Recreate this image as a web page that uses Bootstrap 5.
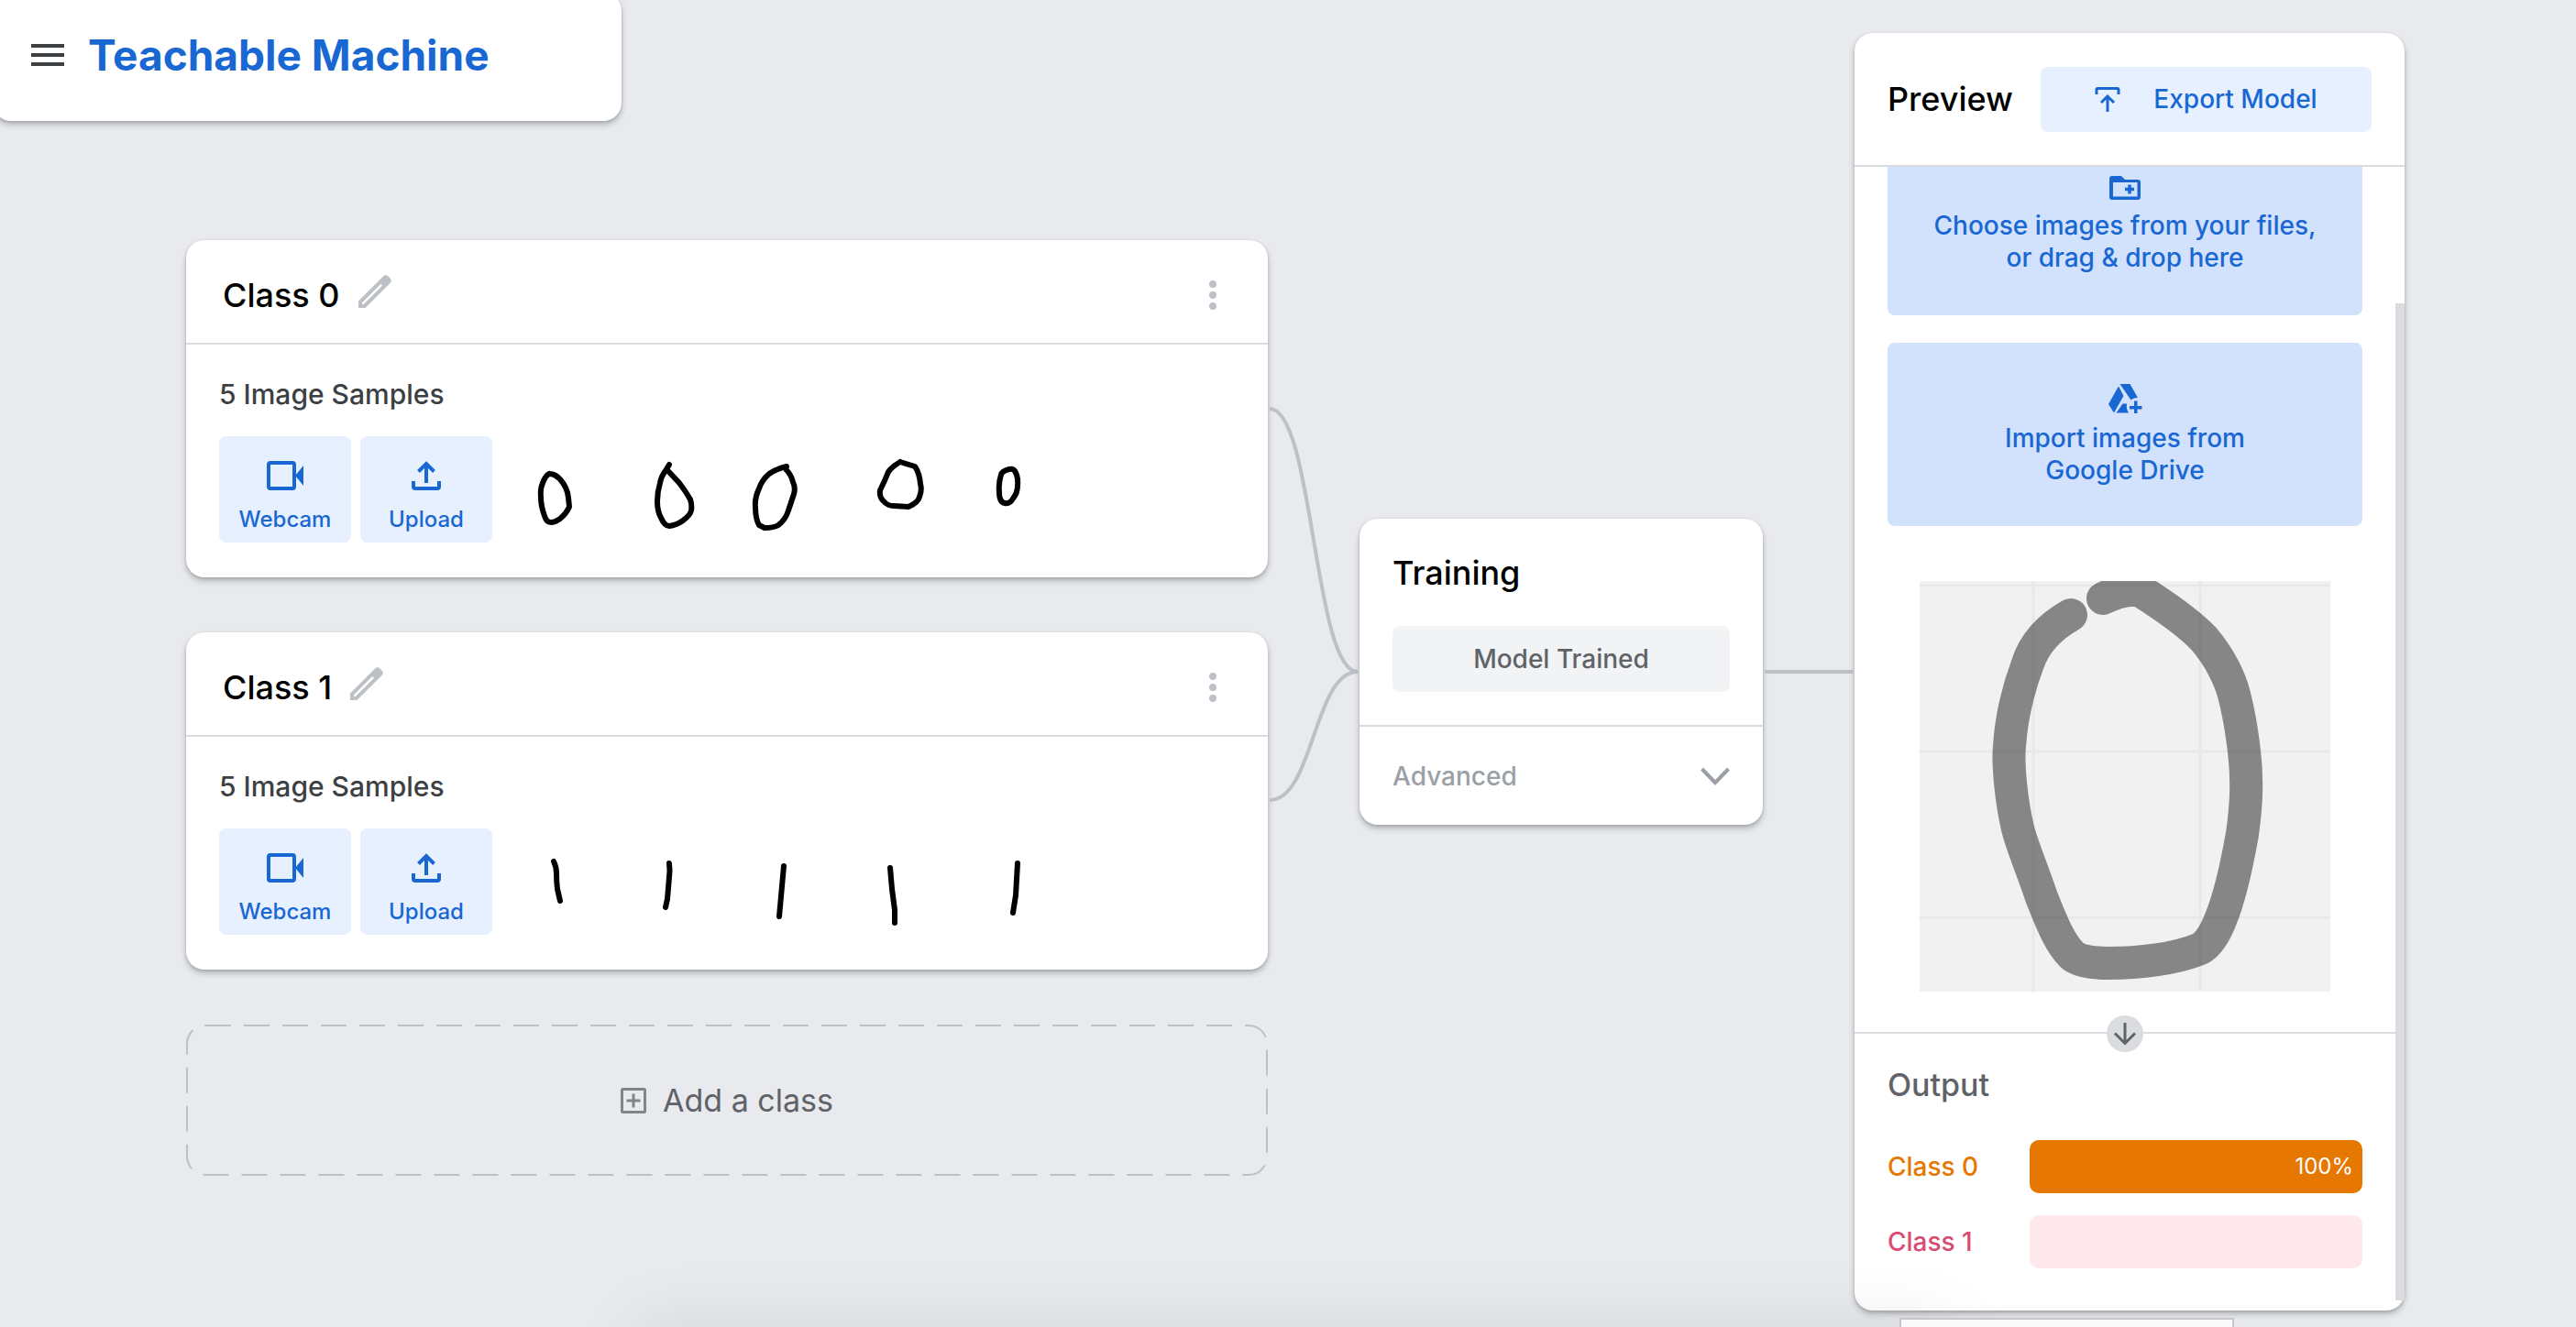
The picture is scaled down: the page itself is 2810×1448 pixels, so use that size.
<!DOCTYPE html>
<html lang="en">
<head>
<meta charset="utf-8">
<meta name="viewport" content="width=device-width, initial-scale=1">
<title>Teachable Machine</title>
<link href="https://cdn.jsdelivr.net/npm/bootstrap@5.3.0/dist/css/bootstrap.min.css" rel="stylesheet">
<style>
  :root { --blue: #1967d2; --line: #bdc1c6; --rule: #dadce0; }
  body { background: #e8eaed; font-family: Inter, Lato, sans-serif; font-weight: 500; color: #000; overflow: hidden; min-height: 100vh; }
  button { font-family: inherit; font-weight: inherit; }
  svg { display: block; flex: none; }
  .panel { background: #fff; border-radius: 20px; box-shadow: 0 4px 6px rgba(60,64,67,.3), 0 1px 3px rgba(60,64,67,.2); }
  .topbar { width: 686px; height: 140px; margin: -8px 0 0 -8px; padding: 0 34px 4px 42px; gap: 26px; }
  .brand-title { color: var(--blue); font-size: 46px; font-weight: 700; line-height: 56px; text-decoration: none; }
  .bare { background: none; border: 0; padding: 0; }
  .flow { padding: 130px 0 0 203px; }
  .classes { gap: 60px; }
  .title { font-size: 36px; line-height: 44px; font-weight: 500; margin: 0; }
  .class-head { height: 114px; padding: 8px 52px 0 40px; border-bottom: 2px solid var(--rule); gap: 20px; }
  .rename { margin-bottom: 8px; }
  .class-body { padding: 32px 36px 38px; }
  .samples-note { font-size: 30px; line-height: 44px; color: #3c4043; margin: 0 0 24px; }
  .tile-btn { width: 144px; height: 116px; background: #e6f0ff; color: var(--blue); border: 0; border-radius: 8px; padding: 14px 0 0; font-size: 24px; line-height: 32px; gap: 12px; }
  .sources, .thumbs { display: flex; gap: 10px; }
  .samples { gap: 8px; }
  .sample { width: 116px; height: 116px; fill: none; stroke: #000; stroke-width: 6; stroke-linecap: round; stroke-linejoin: round; }
  .add-class { height: 165px; color: #5f6368; font-size: 34px; line-height: 44px; font-weight: 400; gap: 18px; border-radius: 20px; position: relative; }
  .dashes { position: absolute; inset: 0; width: 100%; height: 100%; fill: none; stroke: var(--line); stroke-width: 2; stroke-dasharray: 28 14; }
  .wire { width: 100px; fill: none; stroke: var(--line); stroke-width: 4; padding: 0 2px; }
  .wire-in { margin-top: 180px; height: 436px; }
  .wire-out { margin: 469px 2px 0; height: 4px; background: var(--line); width: 96px; }
  .training { width: 440px; margin-top: 304px; }
  .training-main { padding: 37px 36px 36px; }
  .btn-trained { height: 72px; margin-top: 36px; background: #f1f3f4; color: #5f6368; border: 0; border-radius: 8px; font-size: 28px; }
  .btn-advanced { height: 109px; padding: 0 36px; border-top: 2px solid var(--rule); color: #9aa0a6; font-size: 28px; }
  .preview { width: 600px; height: 1394px; margin: 36px 187px 0 0; position: relative; }
  .preview-head { height: 146px; padding: 0 36px; border-bottom: 2px solid var(--rule); }
  .btn-export { width: 361px; height: 71px; background: #e6f0ff; color: var(--blue); border: 0; border-radius: 8px; font-size: 28px; gap: 36px; }
  .preview-body { overflow: hidden; margin-right: 10px; }
  .uploads { padding: 0 36px; gap: 30px; margin-top: -38px; }
  .btn-drop { height: 200px; background: #d2e1fc; color: var(--blue); border: 0; border-radius: 8px; font-size: 28px; line-height: 35px; gap: 4px; padding: 0; }
  .from-files { padding-bottom: 5px; }
  .photo { width: 448px; height: 448px; margin: 60px auto 44px; }
  .scroll-thumb { position: absolute; right: 0; top: 295px; bottom: 11px; width: 10px; background: var(--rule); }
  .split { border-top: 2px solid var(--rule); height: 2px; }
  .split svg { position: relative; top: -20px; }
  .output { padding: 34px 36px 0; }
  .output h3 { font-size: 34px; line-height: 44px; color: #5f6368; margin: 0 0 38px; }
  .result { gap: 24px; margin-bottom: 24px; font-size: 28px; }
  .result label { width: 131px; }
  .meter { height: 58px; border-radius: 10px; overflow: hidden; }
  .meter div { height: 58px; color: #fff; font-size: 24px; font-weight: 400; padding-right: 10px; }
  .c0 { color: #e67700; } .m0 { background: #ffecd9; } .m0 div { background: #e67700; }
  .c1 { color: #d84c72; } .m1 { background: #ffe8ec; }
  .dock { position: fixed; left: 720px; right: 700px; top: 1470px; height: 100px; box-shadow: 0 0 80px 20px rgba(0,0,0,.1); z-index: 3; }
  .hint { position: fixed; left: 2072px; top: 1438px; width: 365px; height: 40px; background: #fafafa; border: 2px solid #c6c6c6; z-index: 4; }
</style>
</head>
<body>
<div class="d-flex align-items-start">
  <div class="flex-grow-1">
    <header class="topbar panel d-flex align-items-center">
      <button class="bare" type="button" aria-label="Menu"><svg width="36" height="24" fill="#3c4043"><path d="M0 0h36v4H0zM0 10h36v4H0zM0 20h36v4H0z"/></svg></button>
      <a class="brand-title" href="#">Teachable Machine</a>
    </header>
    <main class="flow d-flex align-items-start">
      <div class="classes d-flex flex-column flex-grow-1">
        <section class="panel">
          <div class="class-head d-flex align-items-center">
            <h2 class="title">Class 0</h2>
            <button class="bare rename" type="button" aria-label="Rename Class 0"><svg width="36" height="36" viewBox="0 0 36 36"><path fill="#bdc1c6" fill-rule="evenodd" d="M0 28.500L26.800 1.700Q29.500-1 32.200 1.300L34.700 3.800Q37 6.500 34.300 9.200L7.500 36H0zM4 30.200V32H5.800L26 11.800L24.200 10z"/></svg></button>
            <button class="bare ms-auto" type="button" aria-label="Class 0 options"><svg width="16" height="36" fill="#bdc1c6"><circle cx="8" cy="6" r="4"/><circle cx="8" cy="18" r="4"/><circle cx="8" cy="30" r="4"/></svg></button>
          </div>
          <div class="class-body">
            <p class="samples-note">5 Image Samples</p>
            <div class="samples d-flex">
              <div class="sources">
                <button class="tile-btn d-flex flex-column align-items-center justify-content-center" type="button"><svg width="40" height="40" viewBox="0 0 40 40"><rect x="2" y="6" width="28" height="28" rx="2" fill="none" stroke="#1967d2" stroke-width="4"/><path d="M31 20l9-11v22z" fill="#1967d2"/></svg>Webcam</button>
                <button class="tile-btn d-flex flex-column align-items-center justify-content-center" type="button"><svg width="40" height="40" viewBox="0 0 40 40" fill="none" stroke="#1967d2" stroke-width="4"><path d="M6 26v6q0 2 2 2h24q2 0 2-2v-6M20 28V7M11.500 15.500L20 7l8.500 8.500"/></svg>Upload</button>
              </div>
              <div class="thumbs">
                <svg class="sample" viewBox="0 0 116 116"><path d="M54 41C60 41 63 44 66 47Q74 56 75 67L76 77Q73 84 66 90Q60 94 56 94Q51 94 49 87Q45 76 45 67Q44 58 47 51Q50 43 54 41"/></svg>
                <svg class="sample" viewBox="0 0 116 116"><path d="M59 31L56 36Q50 44 49 51Q46 61 46 71Q46 82 50 89Q54 98 59 98Q67 97 74 92Q82 86 83 81Q84 75 82 69Q77 60 70 51L56 36"/></svg>
                <svg class="sample" viewBox="0 0 116 116"><path d="M61 33Q49 36 42 41Q34 48 31 57Q26 68 27 77Q27 90 31 97L37 100Q47 100 52 97Q60 91 63 81L69 63Q71 56 68 50Q66 42 61 37"/></svg>
                <svg class="sample" viewBox="0 0 116 116"><path d="M59 28Q50 33 46 39Q42 49 37 59Q36 67 41 71Q45 76 52 76L68 77Q79 72 80 66Q83 59 81 52Q80 40 75 33L59 28"/></svg>
                <svg class="sample" viewBox="0 0 116 116"><path d="M52 36Q44 38 43 42Q40 51 41 61Q41 72 47 73Q53 74 56 68Q61 62 61 54Q62 44 58 38Q56 35 52 36"/></svg>
              </div>
            </div>
          </div>
        </section>
        <section class="panel">
          <div class="class-head d-flex align-items-center">
            <h2 class="title">Class 1</h2>
            <button class="bare rename" type="button" aria-label="Rename Class 1"><svg width="36" height="36" viewBox="0 0 36 36"><path fill="#bdc1c6" fill-rule="evenodd" d="M0 28.500L26.800 1.700Q29.500-1 32.200 1.300L34.700 3.800Q37 6.500 34.300 9.200L7.500 36H0zM4 30.200V32H5.800L26 11.800L24.200 10z"/></svg></button>
            <button class="bare ms-auto" type="button" aria-label="Class 1 options"><svg width="16" height="36" fill="#bdc1c6"><circle cx="8" cy="6" r="4"/><circle cx="8" cy="18" r="4"/><circle cx="8" cy="30" r="4"/></svg></button>
          </div>
          <div class="class-body">
            <p class="samples-note">5 Image Samples</p>
            <div class="samples d-flex">
              <div class="sources">
                <button class="tile-btn d-flex flex-column align-items-center justify-content-center" type="button"><svg width="40" height="40" viewBox="0 0 40 40"><rect x="2" y="6" width="28" height="28" rx="2" fill="none" stroke="#1967d2" stroke-width="4"/><path d="M31 20l9-11v22z" fill="#1967d2"/></svg>Webcam</button>
                <button class="tile-btn d-flex flex-column align-items-center justify-content-center" type="button"><svg width="40" height="40" viewBox="0 0 40 40" fill="none" stroke="#1967d2" stroke-width="4"><path d="M6 26v6q0 2 2 2h24q2 0 2-2v-6M20 28V7M11.500 15.500L20 7l8.500 8.500"/></svg>Upload</button>
              </div>
              <div class="thumbs">
                <svg class="sample" viewBox="0 0 116 116"><path d="M59 36Q62 42 62 49Q62 58 63 66L66 79"/></svg>
                <svg class="sample" viewBox="0 0 116 116"><path d="M59 38Q60 46 59 53L57 77L55 86"/></svg>
                <svg class="sample" viewBox="0 0 116 116"><path d="M58 41L53 96"/></svg>
                <svg class="sample" viewBox="0 0 116 116"><path d="M48 43L50 66L53 89V103"/></svg>
                <svg class="sample" viewBox="0 0 116 116"><path d="M61 38L59 73L56 92"/></svg>
              </div>
            </div>
          </div>
        </section>
        <button class="bare add-class d-flex align-items-center justify-content-center" type="button">
          <svg class="dashes" aria-hidden="true"><rect x="1" y="1" rx="20" style="width:calc(100% - 2px);height:calc(100% - 2px)"/></svg>
          <svg width="28" height="28" viewBox="0 0 28 28" fill="none" stroke="#80868b" stroke-width="3"><rect x="1.500" y="1.500" width="25" height="25" rx="1"/><path d="M14 6.500v15M6.500 14h15"/></svg>
          Add a class
        </button>
      </div>
      <svg class="wire wire-in" viewBox="0 0 96 436" preserveAspectRatio="none" aria-hidden="true"><path d="M0 4C48 4 48 291 96 291M0 431C48 431 48 291 96 291"/></svg>
      <section class="training panel">
        <div class="training-main d-flex flex-column">
          <h2 class="title">Training</h2>
          <button class="btn-trained" type="button">Model Trained</button>
        </div>
        <button class="bare btn-advanced w-100 d-flex align-items-center justify-content-between" type="button">Advanced
          <svg width="32" height="20" viewBox="0 0 32 20" fill="none" stroke="#9aa0a6" stroke-width="4"><path d="M1.500 2L16 17L30.500 2"/></svg>
        </button>
      </section>
      <div class="wire-out"></div>
    </main>
  </div>
  <aside class="preview panel flex-shrink-0">
    <div class="preview-head d-flex align-items-center justify-content-between">
      <h2 class="title">Preview</h2>
      <button class="btn-export d-flex align-items-center justify-content-center" type="button"><svg width="28" height="28" viewBox="0 0 28 28" fill="none" stroke="#1967d2" stroke-width="3"><path d="M2 9V4q0-1.500 1.500-1.500h21q1.500 0 1.500 1.500v5M14 28V11M7 18l7-7 7 7"/></svg>Export Model</button>
    </div>
    <div class="preview-body">
      <div class="uploads d-flex flex-column">
        <button class="btn-drop from-files d-flex flex-column align-items-center justify-content-center" type="button">
          <svg width="40" height="40" viewBox="0 0 40 40"><path fill="#1967d2" fill-rule="evenodd" d="M6 7h10l4 4h14q3 0 3 3v16q0 3-3 3H6q-3 0-3-3V10q0-3 3-3zM7 14v15.500h26.500V14z"/><path d="M25 16.500v10M20 21.500h10" stroke="#1967d2" stroke-width="3.500"/></svg>
          <span>Choose images from your files,<br>or drag &amp; drop here</span>
        </button>
        <button class="btn-drop d-flex flex-column align-items-center justify-content-center" type="button">
          <svg width="40" height="40" viewBox="0 0 40 40" fill="#1967d2"><path d="M14.500 2h11l8.500 15q-5 0-7.500 2.500zM13 4.500L18.500 15 8 33.500 2 24zM17.500 23.500h4.500q-1 5 2 10H10.500zM30 20.500h3.500V26H38.500v3.500h-5V34H30v-4.500h-5V26h5z"/></svg>
          <span>Import images from<br>Google Drive</span>
        </button>
      </div>
      <svg class="photo" viewBox="0 0 448 448">
        <rect width="448" height="448" fill="#f1f1f1"/>
        <path d="M200 19Q222 8 240 10C262 24 292 44 310 63C328 84 339 108 343 124C351 155 356 195 356 216C357 240 354 262 352 276C346 310 338 346 328 370C320 390 312 399 304 402C280 412 240 417 206 417C188 417 172 414 166 408C152 394 144 372 133 345C122 312 112 290 107 270C100 240 96 200 98 180C100 150 106 122 118 90C126 66 142 50 165 37" fill="none" stroke="#868686" stroke-width="36" stroke-linecap="round" stroke-linejoin="round"/>
        <path d="M124 0v448M306 0v448M0 5h448M0 186h448M0 367h448" stroke="#000" stroke-opacity=".035" stroke-width="3"/>
      </svg>
      <div class="split d-flex justify-content-center"><svg width="40" height="40" viewBox="0 0 40 40"><circle cx="20" cy="20" r="20" fill="#dadce0"/><path d="M20 8v22M9 19.500L20 30.500l11-11" fill="none" stroke="#5f6368" stroke-width="3"/></svg></div>
      <div class="output">
        <h3>Output</h3>
        <div class="result d-flex align-items-center"><label class="c0" for="m0">Class 0</label><div id="m0" class="meter m0 flex-grow-1" role="meter" aria-label="Class 0" aria-valuenow="100"><div class="d-flex align-items-center justify-content-end" style="width:100%">100%</div></div></div>
        <div class="result d-flex align-items-center"><label class="c1" for="m1">Class 1</label><div id="m1" class="meter m1 flex-grow-1" role="meter" aria-label="Class 1" aria-valuenow="0"></div></div>
      </div>
    </div>
    <div class="scroll-thumb"></div>
  </aside>
</div>
<div class="dock"></div>
<div class="hint"></div>
<script src="https://cdn.jsdelivr.net/npm/bootstrap@5.3.0/dist/js/bootstrap.bundle.min.js"></script>
</body>
</html>
